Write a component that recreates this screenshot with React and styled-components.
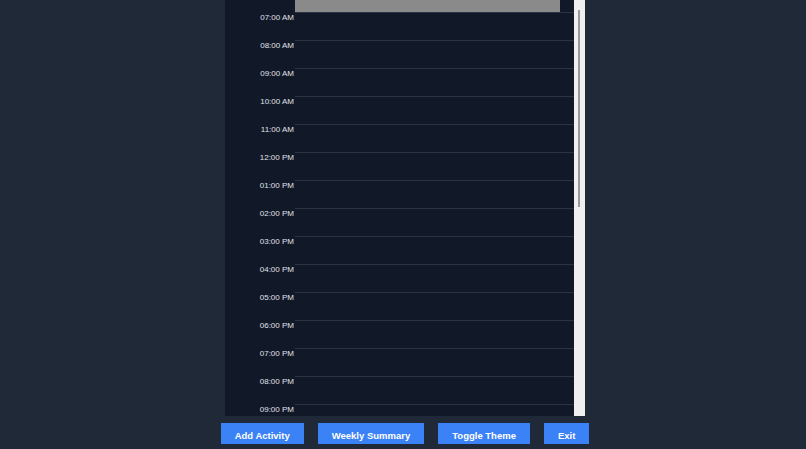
import React from 'react'
import styled, { createGlobalStyle } from 'styled-components'

const GlobalStyle = createGlobalStyle`
  html, body {
    margin: 0;
    padding: 0;
    background: #1f2937;
    height: 100%;
    overflow: hidden;
  }
  body {
    font-family: "Liberation Sans", Arial, sans-serif;
  }
`

const hours = [
  '07:00 AM', '08:00 AM', '09:00 AM', '10:00 AM', '11:00 AM',
  '12:00 PM', '01:00 PM', '02:00 PM', '03:00 PM', '04:00 PM',
  '05:00 PM', '06:00 PM', '07:00 PM', '08:00 PM', '09:00 PM'
]

export default function App() {
  return (
    <>
      <GlobalStyle />
      <Page>
        <Column>
          <Calendar>
            <Timeline>
              <PrevRow>
                <TimeLabel />
                <Slot>
                  <EventBlock />
                </Slot>
              </PrevRow>
              {hours.map((h) => (
                <HourRow key={h}>
                  <TimeLabel>{h}</TimeLabel>
                  <Slot lined />
                </HourRow>
              ))}
            </Timeline>
            <ScrollTrack>
              <ScrollThumb />
            </ScrollTrack>
          </Calendar>
          <Actions>
            <Button>Add Activity</Button>
            <Button>Weekly Summary</Button>
            <Button>Toggle Theme</Button>
            <Button>Exit</Button>
          </Actions>
        </Column>
      </Page>
    </>
  )
}

const Page = styled.div`
  height: 449px;
  display: flex;
  padding-left: 225px;
`
const Column = styled.div`
  width: 360px;
  display: flex;
  flex-direction: column;
`
const Calendar = styled.div`
  height: 416px;
  display: flex;
  background: #111827;
  overflow: hidden;
`
const Timeline = styled.div`
  flex: 1;
  display: flex;
  flex-direction: column;
  overflow: hidden;
`
const PrevRow = styled.div`
  display: flex;
  height: 12px;
  flex-shrink: 0;
`
const HourRow = styled.div`
  display: flex;
  height: 28px;
  flex-shrink: 0;
`
const TimeLabel = styled.div`
  width: 70px;
  flex-shrink: 0;
  box-sizing: border-box;
  padding: 1px 1px 0 0;
  text-align: right;
  font-size: 8px;
  line-height: 10px;
  color: #e0e3e8;
  white-space: nowrap;
`
const Slot = styled.div`
  flex: 1;
  display: flex;
  border-top: ${(p) => (p.lined ? '1px solid #2a3343' : 'none')};
`
const EventBlock = styled.div`
  width: 265px;
  height: 12px;
  background: #8a8a8a;
`
const ScrollTrack = styled.div`
  position: relative;
  width: 11px;
  flex-shrink: 0;
  background: #f0f0f0;
`
const ScrollThumb = styled.div`
  position: absolute;
  top: 10px;
  left: 4px;
  width: 2px;
  height: 197px;
  background: #9a9a9a;
`
const Actions = styled.div`
  display: flex;
  justify-content: center;
  gap: 14px;
  margin-top: 7px;
`
const Button = styled.button`
  flex-shrink: 0;
  height: 21px;
  padding: 4px 14px 0;
  border: none;
  border-radius: 0;
  background: #3b82f6;
  color: #ffffff;
  font-family: "Liberation Sans", Arial, sans-serif;
  font-weight: bold;
  font-size: 9.5px;
  white-space: nowrap;
  cursor: pointer;
`
